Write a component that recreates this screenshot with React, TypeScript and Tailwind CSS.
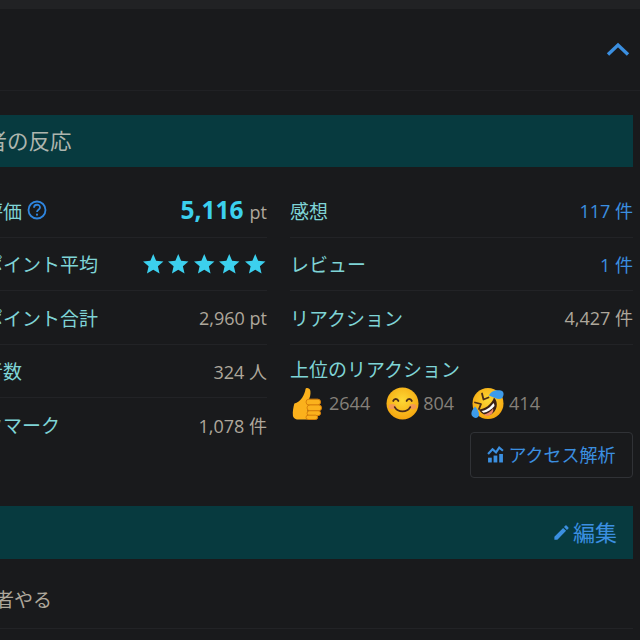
import { MdEdit, MdStar } from "react-icons/md";

const font = { fontFamily: '"Open Sans", "Noto Sans CJK JP", sans-serif' };

const ThumbsUp = () => (
  <svg viewBox="0 0 32 34" className="h-[33px] w-[32px]">
    <path
      d="M3 17c3-1 6-3 8-6 2-3 3-6 3.500-9 .3-1.500 4.500-1.500 5 2 .5 3.500-.5 7-2 9.500l-1.500 20H8c-3 0-6-1-6.500-4-.5-4 .5-9 1.500-12.500z"
      fill="#fbb11c"
    />
    <g fill="#fbb11c" stroke="#d87f0a" strokeWidth="1">
      <rect x="15" y="12.500" width="15" height="6" rx="3" />
      <rect x="16" y="18.500" width="15" height="6" rx="3" />
      <rect x="16" y="24.500" width="14" height="5" rx="2.500" />
      <rect x="15" y="29" width="12" height="4.500" rx="2.200" />
    </g>
  </svg>
);

const Smile = () => (
  <svg viewBox="0 0 32 32" className="h-[33px] w-[33px]">
    <defs>
      <radialGradient id="smile" cx="50%" cy="40%" r="60%">
        <stop offset="0%" stopColor="#fdd835" />
        <stop offset="100%" stopColor="#f5a60f" />
      </radialGradient>
    </defs>
    <circle cx="16" cy="16" r="15.500" fill="url(#smile)" />
    <ellipse cx="6" cy="19" rx="3.500" ry="2.500" fill="#f28b6a" opacity="0.7" />
    <ellipse cx="26" cy="19" rx="3.500" ry="2.500" fill="#f28b6a" opacity="0.7" />
    <g fill="none" stroke="#4a2c1a" strokeWidth="1.800" strokeLinecap="round">
      <path d="M7 13.500c1-2.500 4-2.500 5 0" />
      <path d="M20 13.500c1-2.500 4-2.500 5 0" />
      <path d="M8.500 19.500c3 5.500 12 5.500 15 0" />
    </g>
  </svg>
);

const Rofl = () => (
  <svg viewBox="0 0 34 32" className="h-[33px] w-[34px]">
    <defs>
      <radialGradient id="rofl" cx="50%" cy="40%" r="60%">
        <stop offset="0%" stopColor="#fdd835" />
        <stop offset="100%" stopColor="#f5a60f" />
      </radialGradient>
    </defs>
    <circle cx="17" cy="16" r="15.500" fill="url(#rofl)" />
    <path d="M8 22c5 0 13-5 15-12 5 5 3 14-3 17-5 2-10-1-12-5z" fill="#3a2015" />
    <path d="M10.500 23.500c4-.5 9-3.500 12-8 .7 1 1 2 1 3-3 3.500-7 6-11 6.800z" fill="#fff" />
    <path d="M13 27c3-.5 7-3 9-6 1 3-1 6-4 7-2 .6-4 .3-5-1z" fill="#f0866a" />
    <g fill="none" stroke="#4a2c1a" strokeWidth="1.800" strokeLinecap="round" strokeLinejoin="round">
      <path d="M11 6l1.500 6 5-2" />
      <path d="M4 15l6 1.500-2 5" />
    </g>
    <path d="M18 8c2-5 7-6 12-5 3 1 3 4 2 6-1 3-5 3-8 1.500-2-1-4-1.500-6-2.500z" fill="#3d9be9" />
    <path d="M4 19c2 2 4 5 4 8 0 3-3 4-5 3s-3-3-2.500-5c.3-2 2-4 3.500-6z" fill="#3d9be9" />
  </svg>
);

// bar chart with a trend line over it
const AnalysisIcon = () => (
  <svg viewBox="0 0 16 16" className="h-[17px] w-[17px]" fill="#3b8fe0">
    <rect x="1" y="11" width="3.500" height="4.500" />
    <rect x="6.200" y="9" width="3.500" height="6.500" />
    <rect x="11.500" y="7.500" width="3.500" height="8" />
    <path d="M1 7.500l4.200-4.500 3.300 3 3-4.500 3.500 3" fill="none" stroke="#3b8fe0" strokeWidth="2" />
  </svg>
);

const HelpIcon = () => (
  <svg viewBox="0 0 20 20" className="h-[20px] w-[20px]" fill="none" stroke="#2f86e0">
    <circle cx="10" cy="10" r="8.500" strokeWidth="1.800" />
    <path d="M7 7.800c0-4 6-4 6-.4 0 2.400-3 2.400-3 4.700" strokeWidth="1.800" />
    <circle cx="10" cy="14.700" r="1.100" fill="#2f86e0" stroke="none" />
  </svg>
);

const cjkFont = "[font-family:'Noto_Sans_CJK_JP',sans-serif]";
const labelClass = `${cjkFont} text-[19px] leading-none text-[#7fd4d6]`;
const valueClass = "pt-[2px] text-[18px] leading-none text-[#aea79b]";
const linkValueClass = "pt-[2px] text-[18px] leading-none text-[#3b8fe0]";
const rowClass = "flex h-[53.500px] items-center justify-between border-b border-[#222326]";

const leftRows = [
  { label: "評価ポイント合計", value: "2,960 pt" },
  { label: "評価者数", value: "324 人" },
];

const App = () => {
  return (
    <div className="h-[640px] w-[640px] overflow-hidden bg-[#191a1c]" style={font}>
      <div className="h-[9px] bg-[#212224]" />

      {/* collapsible header */}
      <div className="flex h-[82px] items-start justify-end border-b border-[#202124] pt-[33px] pr-[10px]">
        <svg viewBox="0 0 24 14" className="h-[14px] w-[24px]" fill="none" stroke="#3b8fe0" strokeWidth="3.400">
          <path d="M2 12.500L12 3l10 9.500" />
        </svg>
      </div>

      <div className="ml-[-54px] w-[687px]">
        <div className="mt-[24px] flex h-[52px] items-center bg-[#073a3f] pl-[18px] text-[21.500px] text-[#aeb5ae]">
          読者の反応
        </div>

        <div className="mt-[17px] flex gap-[23px]">
          {/* left column */}
          <div className="w-[321px]">
            <div className={rowClass}>
              <span className={`${labelClass} flex items-center gap-[5px]`}>
                総合評価
                <HelpIcon />
              </span>
              <span className="flex items-baseline gap-[6px]">
                <span className="text-[24.500px] leading-none font-bold text-[#3cd0ee]">5,116</span>
                <span className="text-[18px] leading-none text-[#aea79b]">pt</span>
              </span>
            </div>
            <div className={rowClass}>
              <span className={labelClass}>評価ポイント平均</span>
              <span className="flex gap-[1px]">
                {[0, 1, 2, 3, 4].map((i) => (
                  <MdStar key={i} className="h-[24.500px] w-[24.500px] text-[#3cd0ee]" />
                ))}
              </span>
            </div>
            {leftRows.map((row) => (
              <div key={row.label} className={rowClass}>
                <span className={labelClass}>{row.label}</span>
                <span className={valueClass}>{row.value}</span>
              </div>
            ))}
            <div className="flex h-[53.500px] items-center justify-between">
              <span className={labelClass}>ブックマーク</span>
              <span className={valueClass}>1,078 件</span>
            </div>
          </div>

          {/* right column */}
          <div className="flex-1">
            <div className={rowClass}>
              <span className={labelClass}>感想</span>
              <span className={linkValueClass}>117 件</span>
            </div>
            <div className={rowClass}>
              <span className={labelClass}>レビュー</span>
              <span className={linkValueClass}>1 件</span>
            </div>
            <div className={rowClass}>
              <span className={labelClass}>リアクション</span>
              <span className={valueClass}>4,427 件</span>
            </div>
            <div className="pt-[14px]">
              <div className={labelClass}>上位のリアクション</div>
              <div className="mt-[9px] flex items-center text-[18px] leading-none text-[#85807a]">
                <span className="ml-[1px]">
                  <ThumbsUp />
                </span>
                <span className="ml-[6px]">2644</span>
                <span className="ml-[16px] flex items-center gap-[4px]">
                  <Smile />
                  804
                </span>
                <span className="ml-[17px] flex items-center gap-[4px]">
                  <Rofl />
                  414
                </span>
              </div>
            </div>
            <div className="mt-[12px] flex justify-end">
              <div className={`${cjkFont} flex h-[46px] w-[163px] items-center justify-center gap-[4px] rounded-[4px] border border-[#303236] text-[18px] text-[#3b8fe0]`}>
                <AnalysisIcon />
                アクセス解析
              </div>
            </div>
          </div>
        </div>

        <div className="mt-[28px] flex h-[53px] items-center justify-end gap-[2px] bg-[#073a3f] pr-[16px] text-[22px] text-[#3b8fe0]">
          <MdEdit className="h-[19px] w-[19px]" />
          編集
        </div>

        <div className="flex h-[70px] items-center border-b border-[#222326] pt-[14px] pl-[30px] text-[19px] text-[#aea79b]">
          作者やる
        </div>
      </div>
    </div>
  );
};

export default App;
